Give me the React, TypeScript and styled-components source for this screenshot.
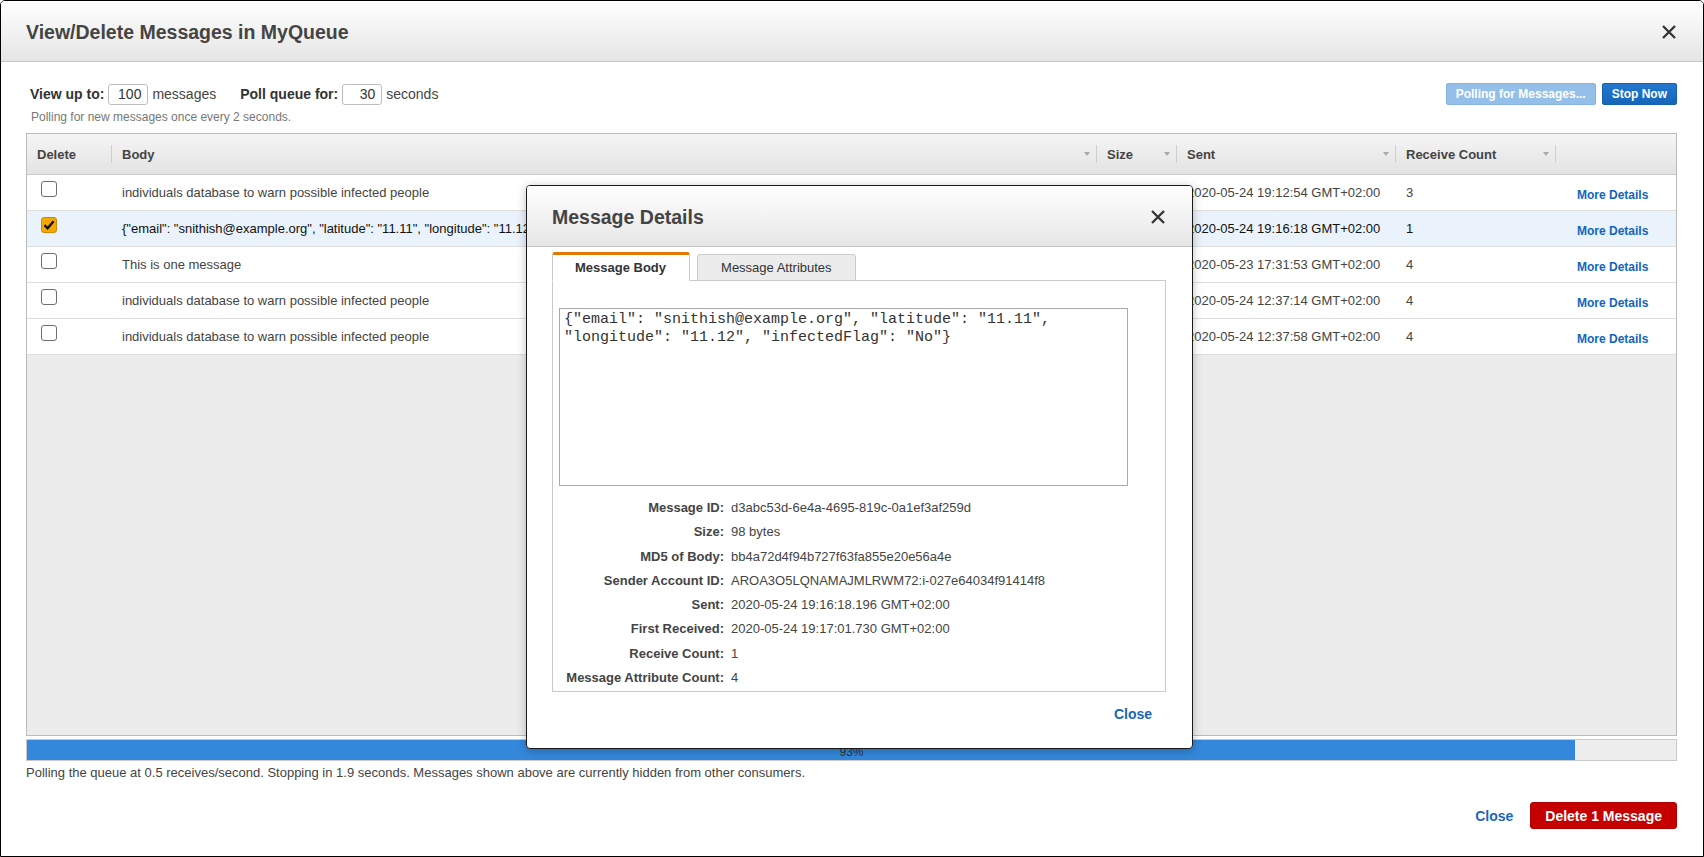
import React from "react";
import styled, { createGlobalStyle } from "styled-components";

const GlobalStyle = createGlobalStyle`
  html, body {
    margin: 0;
    padding: 0;
    background: #fff;
  }
  body {
    font-family: "Liberation Sans", Arial, sans-serif;
    color: #444;
  }
  * {
    box-sizing: border-box;
  }
`;

type Message = {
  body: string;
  size: string;
  sent: string;
  count: number;
  checked?: boolean;
};

const messages: Message[] = [
  { body: "individuals database to warn possible infected people", size: "53 bytes", sent: "2020-05-24 19:12:54 GMT+02:00", count: 3 },
  {
    body: '{"email": "snithish@example.org", "latitude": "11.11", "longitude": "11.12", "infectedFlag": "No"}',
    size: "98 bytes",
    sent: "2020-05-24 19:16:18 GMT+02:00",
    count: 1,
    checked: true,
  },
  { body: "This is one message", size: "19 bytes", sent: "2020-05-23 17:31:53 GMT+02:00", count: 4 },
  { body: "individuals database to warn possible infected people", size: "53 bytes", sent: "2020-05-24 12:37:14 GMT+02:00", count: 4 },
  { body: "individuals database to warn possible infected people", size: "53 bytes", sent: "2020-05-24 12:37:58 GMT+02:00", count: 4 },
];

const details: [string, string][] = [
  ["Message ID:", "d3abc53d-6e4a-4695-819c-0a1ef3af259d"],
  ["Size:", "98 bytes"],
  ["MD5 of Body:", "bb4a72d4f94b727f63fa855e20e56a4e"],
  ["Sender Account ID:", "AROA3O5LQNAMAJMLRWM72:i-027e64034f91414f8"],
  ["Sent:", "2020-05-24 19:16:18.196 GMT+02:00"],
  ["First Received:", "2020-05-24 19:17:01.730 GMT+02:00"],
  ["Receive Count:", "1"],
  ["Message Attribute Count:", "4"],
];

const columns = [
  { title: "Delete", arrow: false, divider: true },
  { title: "Body", arrow: true, divider: true },
  { title: "Size", arrow: true, divider: true },
  { title: "Sent", arrow: true, divider: true },
  { title: "Receive Count", arrow: true, divider: true },
  { title: "", arrow: false, divider: false },
];

// elapsed share of the poll, shown floored in the label
const progress = 93.85;

function CloseIcon() {
  return (
    <svg width="16" height="16" viewBox="0 0 16 16">
      <path d="M2 2 L14 14 M14 2 L2 14" stroke="#333" strokeWidth="2.3" strokeLinecap="butt" fill="none" />
    </svg>
  );
}

function CheckMark() {
  return (
    <svg width="12" height="12" viewBox="0 0 12 12">
      <path d="M1.5 6.2 L4.6 9.3 L10.6 2.2" stroke="#111" strokeWidth="2.4" fill="none" />
    </svg>
  );
}

export default function App() {
  return (
    <>
      <GlobalStyle />
      <Window>
        <Header>
          <Title>View/Delete Messages in MyQueue</Title>
          <CloseIcon />
        </Header>
        <Content>
          <Controls>
            <ControlGroup>
              <Label>View up to:</Label>
              <NumberBox>100</NumberBox>
              <Unit>messages</Unit>
            </ControlGroup>
            <ControlGroup>
              <Label>Poll queue for:</Label>
              <NumberBox>30</NumberBox>
              <Unit>seconds</Unit>
            </ControlGroup>
            <Actions>
              <ActionButton $variant="disabled">Polling for Messages...</ActionButton>
              <ActionButton $variant="primary">Stop Now</ActionButton>
            </Actions>
          </Controls>
          <Hint>Polling for new messages once every 2 seconds.</Hint>

          <Table>
            <HeadRow>
              {columns.map((c, i) => (
                <HeadCell key={i} $divider={c.divider}>
                  <span>{c.title}</span>
                  {c.arrow && <SortArrow />}
                </HeadCell>
              ))}
            </HeadRow>
            {messages.map((m, i) => (
              <Row key={i} $selected={!!m.checked}>
                <CheckCell>
                  <CheckBox $checked={!!m.checked}>{m.checked && <CheckMark />}</CheckBox>
                </CheckCell>
                <Cell>{m.body}</Cell>
                <Cell>{m.size}</Cell>
                <Cell>{m.sent}</Cell>
                <Cell>{m.count}</Cell>
                <Cell>
                  <DetailsLink>More Details</DetailsLink>
                </Cell>
              </Row>
            ))}
            <EmptyArea />
          </Table>

          <Progress>
            <ProgressFill style={{ width: `${progress}%` }} />
            <ProgressText>{Math.floor(progress)}%</ProgressText>
          </Progress>
          <Status>
            Polling the queue at 0.5 receives/second. Stopping in 1.9 seconds. Messages shown above are currently hidden from other consumers.
          </Status>

          <Footer>
            <LinkButton>Close</LinkButton>
            <DangerButton>Delete 1 Message</DangerButton>
          </Footer>
        </Content>

        <Modal>
          <ModalHeader>
            <ModalTitle>Message Details</ModalTitle>
            <CloseIcon />
          </ModalHeader>
          <ModalBody>
            <Tabs>
              <Tab $active>Message Body</Tab>
              <Tab>Message Attributes</Tab>
            </Tabs>
            <Panel>
              <BodyText
                readOnly
                value={'{"email": "snithish@example.org", "latitude": "11.11",\n"longitude": "11.12", "infectedFlag": "No"}'}
              />
              <DetailGrid>
                {details.map(([k, v]) => (
                  <React.Fragment key={k}>
                    <DetailLabel>{k}</DetailLabel>
                    <DetailValue>{v}</DetailValue>
                  </React.Fragment>
                ))}
              </DetailGrid>
            </Panel>
          </ModalBody>
          <ModalFooter>
            <LinkButton>Close</LinkButton>
          </ModalFooter>
        </Modal>
      </Window>
    </>
  );
}

const Window = styled.div`
  position: relative;
  width: 1704px;
  height: 857px;
  border: 1px solid #000;
  border-radius: 5px 5px 0 0;
  background: #fff;
  overflow: hidden;
`;

const Header = styled.div`
  display: flex;
  align-items: center;
  justify-content: space-between;
  height: 61px;
  padding: 2px 26px 0 25px;
  background: linear-gradient(#ffffff, #e5e5e5);
  border-bottom: 1px solid #c6c6c6;
`;

const Title = styled.h1`
  margin: 0;
  font-size: 19.5px;
  font-weight: 700;
  color: #444;
`;

const Content = styled.div`
  padding: 0 26px 0 25px;
`;

const Controls = styled.div`
  display: flex;
  align-items: center;
  gap: 24px;
  height: 22px;
  margin-top: 21px;
  padding-left: 4px;
`;

const ControlGroup = styled.div`
  display: flex;
  align-items: center;
  gap: 4px;
  font-size: 14px;
`;

const Label = styled.span`
  font-weight: 700;
  color: #333;
`;

const NumberBox = styled.span`
  display: inline-flex;
  align-items: center;
  justify-content: flex-end;
  width: 40px;
  height: 21px;
  padding-right: 6px;
  border: 1px solid #bdbdbd;
  border-radius: 3px;
  color: #333;
  font-size: 14px;
`;

const Unit = styled.span`
  color: #444;
`;

const Actions = styled.div`
  display: flex;
  gap: 6px;
  margin-left: auto;
`;

const ActionButton = styled.button<{ $variant: "disabled" | "primary" }>`
  height: 22px;
  padding: 0 9px;
  border-radius: 2px;
  font-family: "Liberation Sans", Arial, sans-serif;
  font-size: 12px;
  font-weight: 700;
  color: #fff;
  border: 1px solid ${({ $variant }) => ($variant === "primary" ? "#155fae" : "#86b4e2")};
  background: ${({ $variant }) =>
    $variant === "primary" ? "linear-gradient(#2277cc, #1566bb)" : "#93bfe9"};
`;

const Hint = styled.div`
  margin-top: 5px;
  padding-left: 5px;
  font-size: 12px;
  line-height: 14px;
  color: #777;
`;

const Table = styled.div`
  display: flex;
  flex-direction: column;
  height: 603px;
  margin-top: 9px;
  border: 1px solid #bbb;
  overflow: hidden;
`;

const gridCols = "85px 985px 80px 219px 160px 1fr";

const HeadRow = styled.div`
  display: grid;
  grid-template-columns: ${gridCols};
  height: 41px;
  background: linear-gradient(#f5f5f5, #e3e3e3);
  border-bottom: 1px solid #cacaca;
`;

const HeadCell = styled.div<{ $divider: boolean }>`
  position: relative;
  display: flex;
  align-items: center;
  justify-content: space-between;
  padding: 0 7px 0 10px;
  font-size: 13px;
  font-weight: 700;
  color: #444;

  &::after {
    content: "";
    display: ${({ $divider }) => ($divider ? "block" : "none")};
    position: absolute;
    right: 0;
    top: 11px;
    height: 18px;
    width: 1px;
    background: #cfcfcf;
  }
`;

const SortArrow = styled.span`
  width: 0;
  height: 0;
  border-left: 3.5px solid transparent;
  border-right: 3.5px solid transparent;
  border-top: 4px solid #aaa;
`;

const Row = styled.div<{ $selected: boolean }>`
  display: grid;
  grid-template-columns: ${gridCols};
  height: 36px;
  border-bottom: 1px solid #dedede;
  background: ${({ $selected }) => ($selected ? "#eaf2fc" : "#fff")};
  color: ${({ $selected }) => ($selected ? "#111" : "#444")};
`;

const Cell = styled.div`
  display: flex;
  align-items: center;
  padding: 0 10px;
  font-size: 13px;
  white-space: nowrap;
  overflow: hidden;
`;

const CheckCell = styled(Cell)`
  padding-left: 14px;
`;

const CheckBox = styled.span<{ $checked: boolean }>`
  display: inline-flex;
  align-items: center;
  justify-content: center;
  width: 16px;
  height: 16px;
  margin-bottom: 7px;
  border-radius: 3px;
  border: 1px solid ${({ $checked }) => ($checked ? "#d08a00" : "#6e6e6e")};
  background: ${({ $checked }) => ($checked ? "#f5a800" : "#fff")};
`;

const DetailsLink = styled.a`
  margin-top: 4px;
  padding-left: 11px;
  font-size: 12px;
  font-weight: 700;
  color: #1166bb;
  cursor: pointer;
`;

const EmptyArea = styled.div`
  flex: 1;
  background: #ececec;
`;

const Progress = styled.div`
  position: relative;
  height: 22px;
  margin-top: 3px;
  border: 1px solid #cacaca;
  background: #ededed;
`;

const ProgressFill = styled.div`
  height: 100%;
  background: #3388dc;
`;

const ProgressText = styled.span`
  position: absolute;
  inset: 0;
  display: flex;
  align-items: center;
  justify-content: center;
  padding-top: 3px;
  font-size: 12px;
  color: #333;
`;

const Status = styled.div`
  margin-top: 4px;
  font-size: 13px;
  line-height: 16px;
  color: #444;
`;

const Footer = styled.div`
  display: flex;
  align-items: center;
  justify-content: flex-end;
  gap: 17px;
  margin-top: 21px;
`;

const LinkButton = styled.a`
  font-size: 14px;
  font-weight: 700;
  color: #1a66b8;
  cursor: pointer;
`;

const DangerButton = styled.button`
  height: 27px;
  padding: 0 14px;
  border: 1px solid #b00000;
  border-radius: 3px;
  background: #c40000;
  color: #fff;
  font-family: "Liberation Sans", Arial, sans-serif;
  font-size: 14px;
  font-weight: 700;
`;

const Modal = styled.div`
  position: absolute;
  left: 525px;
  top: 184px;
  width: 667px;
  background: #fff;
  border: 1px solid #1a1a1a;
  border-radius: 4px;
  box-shadow: 0 2px 10px rgba(0, 0, 0, 0.25);
  overflow: hidden;
`;

const ModalHeader = styled.div`
  display: flex;
  align-items: center;
  justify-content: space-between;
  height: 61px;
  padding: 2px 26px 0 25px;
  background: linear-gradient(#ffffff, #e6e6e6);
  border-bottom: 1px solid #c6c6c6;
`;

const ModalTitle = styled.h2`
  margin: 0;
  font-size: 19.5px;
  font-weight: 700;
  color: #444;
`;

const ModalBody = styled.div`
  padding: 5px 26px 0 25px;
`;

const Tabs = styled.div`
  display: flex;
  align-items: flex-end;
  gap: 7px;
  position: relative;
  z-index: 1;
  margin-bottom: -1px;
`;

const Tab = styled.div<{ $active?: boolean }>`
  display: flex;
  align-items: center;
  justify-content: center;
  height: ${({ $active }) => ($active ? "29px" : "27px")};
  padding: ${({ $active }) => ($active ? "0 23px 0 22px" : "0 23px")};
  font-size: 13px;
  font-weight: ${({ $active }) => ($active ? 700 : 400)};
  color: #333;
  background: ${({ $active }) => ($active ? "#fff" : "#ececec")};
  border: 1px solid #cacaca;
  border-top: ${({ $active }) => ($active ? "3px solid #e47700" : "1px solid #cacaca")};
  border-bottom: ${({ $active }) => ($active ? "1px solid #fff" : "1px solid #cacaca")};
  border-radius: 3px 3px 0 0;
`;

const Panel = styled.div`
  border: 1px solid #cacaca;
  padding: 27px 0 1px;
`;

const BodyText = styled.textarea`
  display: block;
  width: 569px;
  height: 178px;
  margin-left: 6px;
  padding: 2px 4px;
  border: 1px solid #aaa;
  resize: none;
  overflow: hidden;
  font-family: "Liberation Mono", "DejaVu Sans Mono", monospace;
  font-size: 15px;
  line-height: 18px;
  color: #333;
  outline: none;
`;

const DetailGrid = styled.div`
  display: grid;
  grid-template-columns: 171px 1fr;
  column-gap: 7px;
  margin-top: 10px;
  font-size: 13px;
  line-height: 24.25px;
`;

const DetailLabel = styled.span`
  text-align: right;
  font-weight: 700;
  color: #444;
`;

const DetailValue = styled.span`
  color: #444;
`;

const ModalFooter = styled.div`
  display: flex;
  justify-content: flex-end;
  height: 56px;
  padding: 13px 40px 0 0;
  line-height: 18px;
`;
